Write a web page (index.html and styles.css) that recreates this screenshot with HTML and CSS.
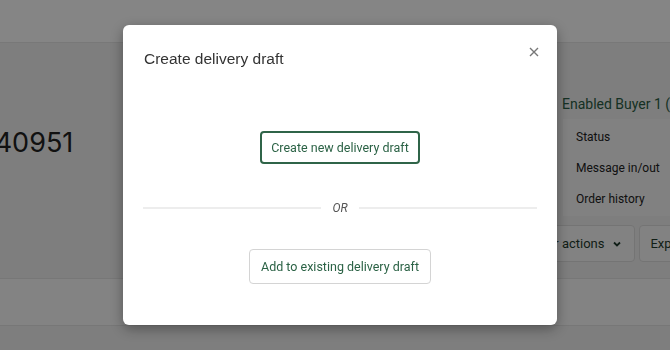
FILE: index.html
```html
<!DOCTYPE html>
<html lang="en">

<head>
    <meta charset="UTF-8">
    <meta name="viewport" content="width=device-width, initial-scale=1.0">
    <title>Create delivery draft</title>
    <link rel="stylesheet" href="styles.css">
</head>

<body>
    <div class="topbar"></div>

    <div class="main">
        <div class="order-col">
            <div class="order-no">340951</div>
        </div>
        <div class="side-col">
            <div class="buyer">Enabled Buyer 1 (Test)</div>
            <ul class="side-menu">
                <li>Status</li>
                <li>Message in/out</li>
                <li>Order history</li>
            </ul>
            <div class="side-actions">
                <button class="ghost-btn">Other actions
                    <svg width="10" height="10" viewBox="0 0 10 10"><path d="M2 3.5 L5 6.5 L8 3.5" fill="none" stroke="#1f3a2c" stroke-width="1.8"/></svg>
                </button>
                <button class="ghost-btn export">Export</button>
            </div>
        </div>
    </div>

    <div class="band"></div>

    <div class="overlay">
        <div class="modal">
            <div class="modal-header">
                <h3>Create delivery draft</h3>
                <button class="close-btn" aria-label="Close">
                    <svg width="10" height="10" viewBox="0 0 10 10"><path d="M1 1 L9 9 M9 1 L1 9" stroke="#777" stroke-width="1.4"/></svg>
                </button>
            </div>
            <div class="modal-body">
                <button class="btn btn-primary">Create new delivery draft</button>
                <div class="divider"><span>OR</span></div>
                <button class="btn btn-secondary">Add to existing delivery draft</button>
            </div>
        </div>
    </div>
</body>

</html>
```

FILE: styles.css
```css
body {
    margin: 0;
    font-family: 'Roboto', 'Liberation Sans', sans-serif;
    background-color: #f2f2f2;
    height: 350px;
    overflow: hidden;
}

.topbar {
    height: 42px;
    background-color: #ffffff;
    border-bottom: 1px solid #e6e6e6;
}

.main {
    display: flex;
    height: 235px;
    background-color: #f1f1f1;
    border-bottom: 1px solid #e4e4e4;
}

.order-col {
    flex: none;
    width: 562px;
    overflow: hidden;
}

.order-no {
    margin: 83px 0 0 -22px;
    font-family: 'Inter', sans-serif;
    font-size: 27px;
    color: #222;
}

.side-col {
    flex: none;
    width: 300px;
}

.buyer {
    margin-top: 52px;
    font-size: 14px;
    color: #2b5e44;
    line-height: 18px;
}

.side-menu {
    list-style: none;
    margin: 6px 0 0 1px;
    padding: 3px 13px 7px;
    background-color: #f8f8f8;
    height: 87px;
}

.side-menu li {
    font-family: 'Roboto', sans-serif;
    font-size: 12px;
    color: #222;
    line-height: 31px;
}

.side-actions {
    display: flex;
    gap: 4px;
    margin: 9px 0 0 -48px;
}

.ghost-btn {
    display: flex;
    align-items: center;
    gap: 8px;
    height: 37px;
    padding: 0 12px;
    background-color: #fafafa;
    border: 1px solid #dedede;
    border-radius: 4px;
    font-family: 'Roboto', sans-serif;
    font-size: 13px;
    color: #1f3a2c;
}

.ghost-btn.export {
    padding-left: 10px;
}

.band {
    height: 46px;
    background-color: #fbfbfb;
    border-bottom: 1px solid #e4e4e4;
}

.overlay {
    position: fixed;
    inset: 0;
    background-color: rgba(0, 0, 0, 0.48);
    padding: 25px 0 0 123px;
}

.modal {
    width: 434px;
    height: 300px;
    box-sizing: border-box;
    background-color: #ffffff;
    border-radius: 6px;
    box-shadow: 0 4px 14px rgba(0, 0, 0, 0.35);
    padding: 0 20px;
}

.modal-header {
    display: flex;
    justify-content: space-between;
    align-items: flex-start;
    padding: 21px 0 0 1px;
}

.modal-header h3 {
    margin: 0;
    padding-top: 2px;
    font-family: 'Liberation Sans', sans-serif;
    font-weight: normal;
    font-size: 15.5px;
    line-height: 22px;
    color: #333;
}

.close-btn {
    margin: 1px -2px 0 0;
    padding: 0;
    border: none;
    background: none;
    display: flex;
}

.modal-body {
    display: flex;
    flex-direction: column;
    align-items: center;
    padding-top: 61px;
}

.btn {
    font-family: 'Roboto', sans-serif;
    font-size: 12.5px;
    color: #2b6245;
    background-color: #ffffff;
    border-radius: 4px;
}

.btn-primary {
    height: 33px;
    padding: 0 9px;
    border: 2px solid #2f6448;
}

.btn-secondary {
    height: 35px;
    padding: 0 11px;
    border: 1px solid #d4d4d4;
}

.divider {
    display: flex;
    align-items: center;
    gap: 11px;
    align-self: stretch;
    height: 16px;
    margin: 36px 0 33px;
}

.divider::before,
.divider::after {
    content: "";
    flex: 1;
    height: 2px;
    background-color: #ededed;
}

.divider span {
    font-size: 12px;
    font-style: italic;
    color: #555;
}
```
